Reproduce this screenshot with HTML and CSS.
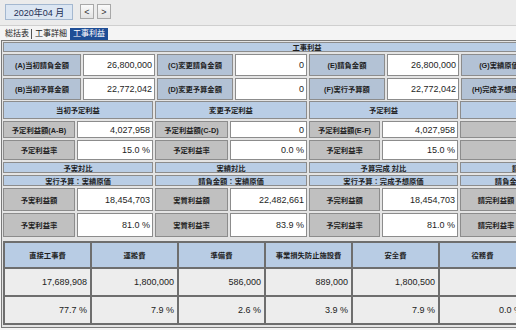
FILE: index.html
```html
<!DOCTYPE html>
<html lang="ja">
<head>
<meta charset="utf-8">
<link rel="stylesheet" href="styles.css">
</head>
<body>
<div class="topbar">
  <div class="month">2020年04 月</div>
  <div class="navs">
    <div class="nav">&lt;</div>
    <div class="nav">&gt;</div>
  </div>
</div>
<div class="tabs">
  <div class="tab first">総括表</div>
  <div class="tab-sep"></div>
  <div class="tab">工事詳細</div>
  <div class="tab active">工事利益</div>
</div>
<div class="panel">
  <div class="grid g1">
    <div class="c h span8">工事利益</div>
    <div class="c lb">(A)当初請負金額</div><div class="c v">26,800,000</div>
    <div class="c lb">(C)変更請負金額</div><div class="c v">0</div>
    <div class="c lb">(E)請負金額</div><div class="c v">26,800,000</div>
    <div class="c lb">(G)実績原価</div><div class="c v">8,345,339</div>
    <div class="c lb">(B)当初予算金額</div><div class="c v">22,772,042</div>
    <div class="c lb">(D)変更予算金額</div><div class="c v">0</div>
    <div class="c lb">(F)実行予算額</div><div class="c v">22,772,042</div>
    <div class="c lb">(H)完成予想原価</div><div class="c v">4,317,339</div>
  </div>
  <div class="grid g2">
    <div class="c h span2">当初予定利益</div>
    <div class="c h span2">変更予定利益</div>
    <div class="c h span2">予定利益</div>
    <div class="c h span2"></div>
    <div class="c lg">予定利益額(A-B)</div><div class="c v">4,027,958</div>
    <div class="c lg">予定利益額(C-D)</div><div class="c v">0</div>
    <div class="c lg">予定利益額(E-F)</div><div class="c v">4,027,958</div>
    <div class="c lg span2"></div>
    <div class="c lg">予定利益率</div><div class="c v">15.0 %</div>
    <div class="c lg">予定利益率</div><div class="c v">0.0 %</div>
    <div class="c lg">予定利益率</div><div class="c v">15.0 %</div>
    <div class="c lg span2"></div>
    <div class="c h span2">予実対比</div>
    <div class="c h span2">実績対比</div>
    <div class="c h span2">予算完成 対比</div>
    <div class="c h span2">請負完成 対比</div>
    <div class="c h span2">実行予算：実績原価</div>
    <div class="c h span2">請負金額：実績原価</div>
    <div class="c h span2">実行予算：完成予想原価</div>
    <div class="c h span2">請負金額：完成予想原価</div>
    <div class="c lg">予実利益額</div><div class="c v">18,454,703</div>
    <div class="c lg">実質利益額</div><div class="c v">22,482,661</div>
    <div class="c lg">予完利益額</div><div class="c v">18,454,703</div>
    <div class="c lg">請完利益額</div><div class="c v">22,482,661</div>
    <div class="c lg">予実利益率</div><div class="c v">81.0 %</div>
    <div class="c lg">実質利益率</div><div class="c v">83.9 %</div>
    <div class="c lg">予完利益率</div><div class="c v">81.0 %</div>
    <div class="c lg">請完利益率</div><div class="c v">83.9 %</div>
  </div>
  <div class="costs">
    <div class="k">直接工事費</div>
    <div class="k">運搬費</div>
    <div class="k">準備費</div>
    <div class="k">事業損失防止施設費</div>
    <div class="k">安全費</div>
    <div class="k">役務費</div>
    <div class="k">技術管理費</div>
    <div class="d">17,689,908</div>
    <div class="d">1,800,000</div>
    <div class="d">586,000</div>
    <div class="d">889,000</div>
    <div class="d">1,800,500</div>
    <div class="d">0</div>
    <div class="d">0</div>
    <div class="d">77.7 %</div>
    <div class="d">7.9 %</div>
    <div class="d">2.6 %</div>
    <div class="d">3.9 %</div>
    <div class="d">7.9 %</div>
    <div class="d">0.0 %</div>
    <div class="d">0.0 %</div>
  </div>
</div>
</body>
</html>
```

FILE: styles.css
```css
* { box-sizing: border-box; }
html, body { margin: 0; padding: 0; }
body {
  width: 516px;
  height: 330px;
  overflow: hidden;
  background: #f4f4f4;
  font-family: "Liberation Sans", "Noto Sans CJK JP", sans-serif;
  color: #222;
}
.topbar {
  height: 26px;
  background: #ebebeb;
  border-bottom: 1px solid #cfcfcf;
  display: flex;
  align-items: flex-start;
  gap: 7px;
  padding: 4px 0 0 5px;
}
.month {
  width: 68px;
  height: 16px;
  background: #dce6f2;
  border: 1px solid #a4b8d0;
  color: #1c2f55;
  font-size: 9px;
  display: flex;
  align-items: center;
  justify-content: center;
}
.navs { display: flex; gap: 3px; }
.nav {
  width: 14px;
  height: 15px;
  border: 1px solid #a8a8a8;
  background: linear-gradient(#fafafa, #e2e2e2);
  font-size: 9px;
  color: #333;
  display: flex;
  align-items: center;
  justify-content: center;
}
.tabs {
  height: 14px;
  display: flex;
  align-items: flex-end;
  padding-left: 5px;
}
.tab {
  height: 12px;
  font-size: 8px;
  line-height: 12px;
  padding: 0 2px;
  color: #222;
  white-space: nowrap;
}
.tab.first { padding: 0 1px 0 0; }
.tab-sep {
  width: 1px;
  height: 10px;
  background: #555;
  margin: 0 1px 1px 1px;
}
.tab.active {
  background: #1f4e96;
  color: #fff;
  padding: 0 3px;
  margin-left: 1px;
}
.panel {
  width: 720px;
  height: 288px;
  margin-left: 1px;
  border: 1px solid #7a7a7a;
  background: #e4e4e4;
  padding: 1px;
}
.grid {
  display: grid;
  gap: 2px;
}
.g1 {
  grid-template-columns: 78px 72px 76px 72px 76px 72px 76px 72px;
  grid-template-rows: 10px 22px 22px;
}
.g2 {
  margin-top: 1px;
  grid-template-columns: 72px 76px 73px 77px 71px 76px 72px 76px;
  grid-template-rows: 18px 17px 20px 11px 11px 23px 24px;
}
.c {
  border: 1px solid #8c8c8c;
  display: flex;
  align-items: center;
  justify-content: center;
  font-size: 7.3px;
  font-weight: bold;
  white-space: nowrap;
  overflow: hidden;
  color: #1e1e1e;
}
.span8 { grid-column: span 8; }
.span2 { grid-column: span 2; }
.h { background: #b9cde5; }
.lb { background: #b3c2d5; }
.lg { background: #c0c0c0; }
.v {
  background: #fff;
  justify-content: flex-end;
  padding-right: 2px;
  font-size: 9px;
  font-weight: normal;
}
.costs {
  margin-top: 4px;
  display: grid;
  grid-template-columns: repeat(7, 85px);
  grid-template-rows: 24px 26px 26px;
  gap: 2px;
  width: max-content;
  border: 2px solid #6e6e6e;
  background: #6e6e6e;
}
.k {
  background: #b8cce4;
  display: flex;
  align-items: center;
  justify-content: center;
  font-size: 7.3px;
  font-weight: bold;
  white-space: nowrap;
  color: #1e1e1e;
}
.d {
  background: #ededed;
  display: flex;
  align-items: center;
  justify-content: flex-end;
  padding-right: 3px;
  font-size: 9px;
  white-space: nowrap;
}
```
